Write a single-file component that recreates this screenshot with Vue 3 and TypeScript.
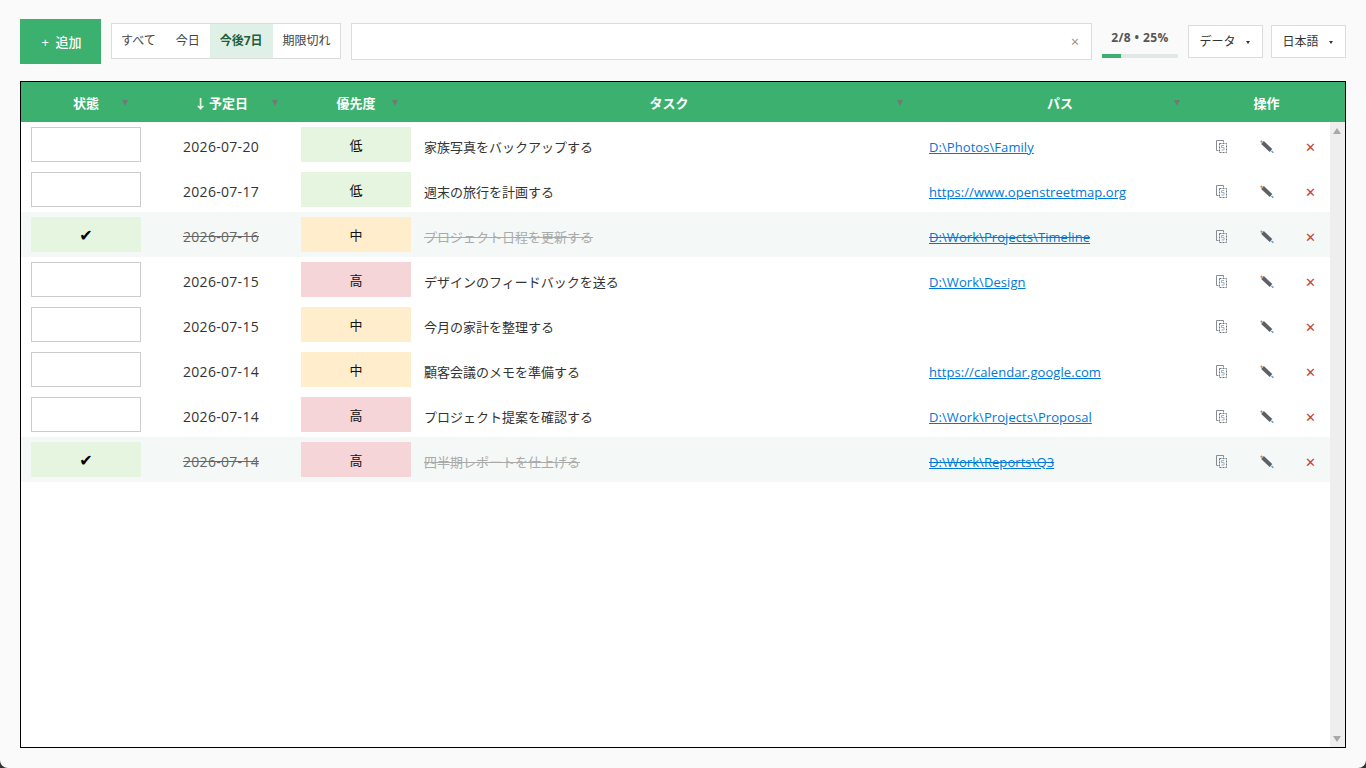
<script setup lang="ts">
import { ref } from 'vue'

type Priority = 'low' | 'mid' | 'high'

interface Task {
  done: boolean
  date: string
  priority: Priority
  title: string
  path: string
}

const priorityLabel: Record<Priority, string> = { low: '低', mid: '中', high: '高' }

const filters = ['すべて', '今日', '今後7日', '期限切れ']
const activeFilter = ref('今後7日')

const columns = [
  { label: '状態', caret: 27 },
  { label: '↓\u2009予定日', caret: 17 },
  { label: '優先度', caret: 27 },
  { label: 'タスク', caret: 18 },
  { label: 'パス', caret: 27 },
  { label: '操作', caret: 0 },
]

const tasks: Task[] = [
  { done: false, date: '2026-07-20', priority: 'low', title: '家族写真をバックアップする', path: 'D:\\Photos\\Family' },
  { done: false, date: '2026-07-17', priority: 'low', title: '週末の旅行を計画する', path: 'https://www.openstreetmap.org' },
  { done: true, date: '2026-07-16', priority: 'mid', title: 'プロジェクト日程を更新する', path: 'D:\\Work\\Projects\\Timeline' },
  { done: false, date: '2026-07-15', priority: 'high', title: 'デザインのフィードバックを送る', path: 'D:\\Work\\Design' },
  { done: false, date: '2026-07-15', priority: 'mid', title: '今月の家計を整理する', path: '' },
  { done: false, date: '2026-07-14', priority: 'mid', title: '顧客会議のメモを準備する', path: 'https://calendar.google.com' },
  { done: false, date: '2026-07-14', priority: 'high', title: 'プロジェクト提案を確認する', path: 'D:\\Work\\Projects\\Proposal' },
  { done: true, date: '2026-07-14', priority: 'high', title: '四半期レポートを仕上げる', path: 'D:\\Work\\Reports\\Q3' },
]
</script>

<template>
  <div class="page">
    <div class="toolbar">
      <button class="add-btn">+&nbsp; 追加</button>
      <div class="filters">
        <span
          v-for="f in filters"
          :key="f"
          class="filter"
          :class="{ active: f === activeFilter }"
        >{{ f }}</span>
      </div>
      <div class="search">
        <span class="search-clear">×</span>
      </div>
      <div class="progress">
        <div class="progress-text">2/8 • 25%</div>
        <div class="progress-track"><div class="progress-fill" style="width: 25%"></div></div>
      </div>
      <button class="menu-btn data-btn">データ<span class="menu-caret"></span></button>
      <button class="menu-btn">日本語<span class="menu-caret"></span></button>
    </div>

    <div class="table">
      <div class="thead">
        <div v-for="col in columns" :key="col.label" class="th">
          {{ col.label }}
          <span v-if="col.caret" class="th-caret" :style="{ right: col.caret - 4 + 'px' }"></span>
        </div>
      </div>
      <div class="body">
        <div class="rows">
          <div v-for="task in tasks" :key="task.title" class="row" :class="{ done: task.done }">
            <div class="cell-block">
              <div class="status" :class="{ checked: task.done }">{{ task.done ? '✔' : '' }}</div>
            </div>
            <div class="date">{{ task.date }}</div>
            <div class="cell-block">
              <div class="priority" :class="task.priority">{{ priorityLabel[task.priority] }}</div>
            </div>
            <div class="title">{{ task.title }}</div>
            <div class="path"><a v-if="task.path" class="link">{{ task.path }}</a></div>
            <div class="actions">
              <svg class="icon-copy" width="12" height="13" viewBox="0 0 12 13" fill="none">
                <path d="M2.5 10.5h-2V.5h7v2" stroke="#868c94" />
                <path d="M3.5 3.5h7v9h-7z" stroke="#6f747a" stroke-dasharray="2 1" />
                <path d="M8 5.5H5.5v2H8v2.5H5.5" stroke="#9fb3c6" />
              </svg>
              <svg class="icon-edit" width="14" height="14" viewBox="0 0 14 14" fill="none">
                <path d="M2.5 2.5 11 10.5" stroke="#5d6166" stroke-width="3.8" />
                <path d="M.8 1 2.2 2.4" stroke="#c98a52" stroke-width="2" />
                <path d="M11.5 11 13.4 12.8" stroke="#5b9bd5" stroke-width="1.4" />
              </svg>
              <span class="delete">✕</span>
            </div>
          </div>
        </div>
        <div class="scrollbar">
          <span class="arrow up"></span>
          <span class="arrow down"></span>
        </div>
      </div>
    </div>
  </div>
</template>

<style>
html,
body {
  background: #333;
}
</style>

<style scoped>
.page {
  box-sizing: border-box;
  height: 768px;
  padding: 19px 20px 20px;
  display: flex;
  flex-direction: column;
  gap: 17px;
  background: #fafafa;
  border-radius: 0 0 8px 8px;
  overflow: hidden;
  color: #333;
  font-family: "Open Sans", "Noto Sans CJK JP", sans-serif;
  font-size: 13px;
}

.toolbar {
  display: flex;
  align-items: center;
  height: 45px;
}

button {
  font-family: inherit;
  font-size: 13px;
  cursor: pointer;
}

.add-btn {
  width: 81px;
  height: 45px;
  border: none;
  background: #3cb06f;
  color: #fff;
  font-weight: 500;
  padding: 0 0 0 2px;
}

.filters {
  display: flex;
  height: 36px;
  margin-left: 10px;
  box-sizing: border-box;
  border: 1px solid #d9dedc;
  background: #fff;
  align-self: flex-start;
  margin-top: 4px;
}

.filter {
  display: flex;
  align-items: center;
  justify-content: center;
  padding: 0 10px;
  color: #444;
  font-size: 12px;
  line-height: 34px;
}

.filter:first-child {
  padding-left: 9px;
}

.filter:last-child {
  padding-right: 9px;
}

.filter.active {
  background: #dff1e7;
  color: #1f5f3c;
  font-weight: 700;
}

.search {
  flex: 1;
  height: 37px;
  margin-left: 10px;
  align-self: flex-start;
  margin-top: 4px;
  box-sizing: border-box;
  border: 1px solid #d9dedc;
  background: #fff;
  display: flex;
  align-items: center;
  justify-content: flex-end;
  padding-right: 12px;
}

.search-clear {
  color: #a08a70;
  font-size: 14px;
}

.progress {
  width: 76px;
  margin-left: 10px;
  align-self: flex-start;
  margin-top: 10px;
}

.progress-text {
  text-align: center;
  font-size: 12px;
  font-weight: 700;
  color: #555;
  line-height: 18px;
  letter-spacing: 0.4px;
  white-space: nowrap;
}

.progress-track {
  height: 4px;
  margin-top: 7px;
  background: #e2e8e5;
}

.progress-fill {
  height: 100%;
  background: #3cb06f;
}

.menu-btn {
  width: 75px;
  height: 33px;
  margin-left: 8px;
  align-self: flex-start;
  margin-top: 6px;
  box-sizing: border-box;
  border: 1px solid #d9dedc;
  background: #fff;
  color: #333;
  padding: 0 2px 2px 0;
  font-size: 12px;
  display: flex;
  align-items: center;
  justify-content: center;
}

.data-btn {
  margin-left: 10px;
}

.menu-caret {
  width: 0;
  height: 0;
  margin: 3px 0 0 10px;
  border-left: 2.5px solid transparent;
  border-right: 2.5px solid transparent;
  border-top: 3px solid #333;
}

.table {
  flex: 1;
  min-height: 0;
  display: flex;
  flex-direction: column;
  border: 1px solid #000;
  background: #fff;
}

.thead,
.row {
  display: grid;
  grid-template-columns: 130px 140px 130px 496px 286px 127px;
}

.thead {
  height: 40px;
  background: #3cb06f;
}

.th {
  position: relative;
  display: flex;
  align-items: center;
  justify-content: center;
  color: #fff;
  font-weight: 700;
  font-size: 13px;
}

.th-caret {
  position: absolute;
  top: 18px;
  width: 0;
  height: 0;
  border-left: 3px solid transparent;
  border-right: 3px solid transparent;
  border-top: 6px solid #6f7a74;
}

.body {
  flex: 1;
  min-height: 0;
  display: flex;
}

.rows {
  flex: 1;
}

.row {
  height: 45px;
  align-items: center;
}

.row.done {
  background: #f4f8f6;
}

.cell-block {
  padding: 0 10px;
}

.status,
.priority {
  box-sizing: border-box;
  height: 35px;
  display: flex;
  align-items: center;
  justify-content: center;
  color: #111;
}

.status {
  border: 1px solid #ccc;
  background: #fff;
  font-family: "DejaVu Sans", sans-serif;
  font-size: 16px;
  color: #000;
  padding-top: 2px;
}

.status.checked {
  border: none;
  background: #e6f5df;
}

.priority {
  font-size: 13px;
}

.priority.low {
  background: #e6f5df;
}

.priority.mid {
  background: #ffedcc;
}

.priority.high {
  background: #f5d5d8;
}

.date {
  text-align: center;
  font-size: 14px;
  letter-spacing: 0.3px;
  color: #333;
  padding-top: 4px;
}

.title {
  padding: 4px 0 0 3px;
  color: #333;
}

.path {
  padding: 4px 0 0 12px;
  letter-spacing: 0.07px;
}

.link {
  color: #0078d7;
  text-decoration: underline;
}

.done .date {
  color: #666;
  text-decoration: line-through;
}

.done .title {
  color: #aaa;
  text-decoration: line-through;
}

.done .link {
  text-decoration: underline line-through;
}

.actions {
  display: flex;
  align-items: center;
  padding: 4px 0 0 13px;
}

.icon-edit {
  margin-left: 32px;
}

.delete {
  margin: 2px 0 0 31px;
  color: #c24437;
  font-family: "DejaVu Sans", sans-serif;
  font-size: 13px;
  line-height: 14px;
}

.scrollbar {
  position: relative;
  width: 15px;
  background: #eee;
}

.arrow {
  position: absolute;
  left: 3px;
  width: 0;
  height: 0;
  border-left: 4px solid transparent;
  border-right: 4px solid transparent;
}

.arrow.up {
  top: 6px;
  border-bottom: 6px solid #a8a8a8;
}

.arrow.down {
  bottom: 5px;
  border-top: 6px solid #a8a8a8;
}
</style>
